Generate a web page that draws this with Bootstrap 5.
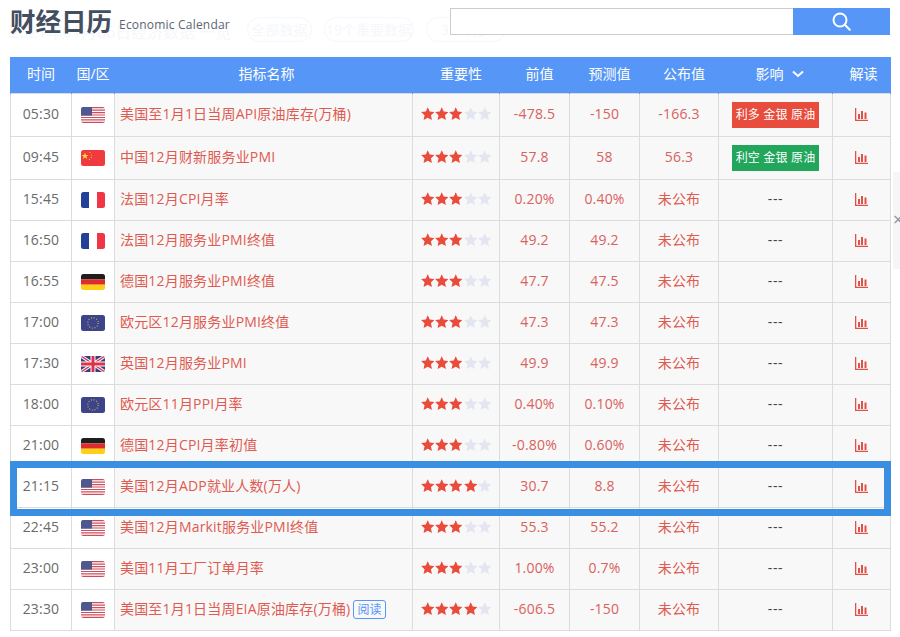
<!DOCTYPE html>
<html lang="zh-CN">
<head>
  <meta charset="UTF-8" />
  <meta name="viewport" content="width=device-width, initial-scale=1" />
  <title>财经日历</title>
  <link href="https://cdn.jsdelivr.net/npm/bootstrap@5.3.3/dist/css/bootstrap.min.css" rel="stylesheet" />
  <style>
    body {
      background: #fff;
      font-family: "Open Sans", "Noto Sans CJK SC", sans-serif;
      font-size: 14px;
      overflow: hidden;
    }

    .page-wrap { height: 637px; padding: 0 10px; overflow: hidden; }

    /* top bar */
    .top-bar { height: 57px; padding-top: 8px; }
    .page-title { font-size: 25.5px; font-weight: 700; color: #434e5e; line-height: 28px; margin: 0; position: relative; top: -1px; }
    .page-sub { font-size: 12px; letter-spacing: .2px; color: #5c6672; margin-left: 7px; position: relative; top: 3px; }
    .search-box { width: 440px; height: 27px; }
    .search-input { width: 343px; height: 27px; border: 1px solid #ccc; border-right: 0; border-radius: 0; padding: 0 8px; outline: none; }
    .search-btn { width: 97px; height: 27px; background: #5596f6; border: 0; border-radius: 0; padding: 0; }

    /* washed out text behind the title */
    .ghost-row { position: absolute; top: 17px; left: 10px; color: #f5f7fb; font-size: 14px; height: 25px; z-index: -1; }
    .ghost-title { width: 237px; font-size: 16px; padding-top: 3px; white-space: nowrap; }
    .ghost-pill { border: 1px solid #f6f7fa; border-radius: 13px; height: 25px; line-height: 23px; text-align: center; margin-right: 12px; }
    .ghost-all { width: 65px; }
    .ghost-key { width: 90px; }
    .ghost-more { width: 80px; }

    /* calendar table */
    .cal-table { table-layout: fixed; width: 880px; margin: 0; border-collapse: collapse; --bs-table-bg: transparent; }
    .cal-table col:nth-child(1) { width: 61px; }
    .cal-table col:nth-child(2) { width: 43px; }
    .cal-table col:nth-child(3) { width: 298px; }
    .cal-table col:nth-child(4) { width: 87px; }
    .cal-table col:nth-child(5) { width: 70px; }
    .cal-table col:nth-child(6) { width: 70px; }
    .cal-table col:nth-child(7) { width: 79px; }
    .cal-table col:nth-child(8) { width: 114px; }
    .cal-table col:nth-child(9) { width: 58px; }
    .cal-table th {
      background: #5596f6; color: #fff; font-weight: 400; height: 36px; padding: 0 0 2px;
      border: 1px solid #5596f6; border-top: 0; border-bottom: 0; text-align: center; vertical-align: middle;
    }
    .cal-table th:nth-child(3) { padding-left: 6px; }
    .cal-table th:nth-child(4),
    .cal-table th:nth-child(5),
    .cal-table th:nth-child(6),
    .cal-table th:nth-child(7) { padding-left: 10px; }
    .cal-table th:nth-child(8) { padding-left: 8px; }
    .cal-table th:nth-child(9) { padding-left: 4px; }
    .cal-table td {
      background: #f8f8f8; border: 1px solid #dcdcdc; padding: 0 0 2px; height: 41px;
      text-align: center; vertical-align: middle; color: #d8625c; letter-spacing: .18px;
    }
    .cal-table tr.tall td { height: 43px; }
    .cal-table td.time-cell { background: #fff; color: #6b6b6b; }
    .cal-table td.flag-cell { background: #fff; padding: 0; }
    .cal-table td.name-cell { text-align: left; padding-left: 5px; color: #df5a50; }
    .cal-table td.unset-cell { color: #df5a50; }
    .cal-table td.none-cell { color: #444; letter-spacing: .6px; }
    .cal-table td.tag-cell, .cal-table td.bars-cell { padding: 0; }
    .flag-svg { display: block; margin: 0 auto; width: 24px; height: 16px; border-radius: 2.5px; opacity: .92; }
    .star-row { display: flex; justify-content: center; gap: .8px; }
    .star-svg { width: 13.5px; height: 13.5px; display: block; }
    .star-on { fill: #ea4c3c; }
    .star-off { fill: #e3e6f0; }
    .tag-box { display: block; width: 87px; height: 26px; margin: 0 auto; line-height: 26px; font-size: 12px; color: #fff; }
    .tag-up { background: #e74c3c; }
    .tag-down { background: #21a65b; }
    .read-tag { display: inline-block; border: 1px solid #5596f6; border-radius: 3px; color: #5596f6; font-size: 12px; line-height: 17px; padding: 0 3px; margin-left: 3px; }
    .bars-svg { width: 13px; height: 13px; display: block; margin: 0 auto; }

    /* current event frame and side tab */
    .now-frame { position: absolute; left: 10px; top: 461px; width: 881px; height: 55px; border: 7px solid #3a8fe0; pointer-events: none; }
    .side-tab { position: absolute; left: 893px; top: 172px; width: 7px; height: 97px; background: #f6f6f6; color: #8a93a5; font-size: 18px; line-height: 94px; overflow: hidden; white-space: nowrap; }
  </style>
</head>
<body>

  <svg width="0" height="0" class="position-absolute">
    <defs>
      <symbol id="fl-us" viewBox="0 0 24 16">
        <rect width="24" height="16" fill="#fff"/>
        <path d="M0 0h24v1.2H0zM0 2.5h24v1.2H0zM0 5h24v1.2H0zM0 7.400h24v1.2H0zM0 9.900h24v1.2H0zM0 12.300h24v1.200H0zM0 14.800h24V16H0z" fill="#c8404f"/>
        <rect width="11" height="8.600" fill="#3f4a85"/>
      </symbol>
      <symbol id="fl-cn" viewBox="0 0 24 16">
        <rect width="24" height="16" fill="#ee2a30"/>
        <path d="M4 2.500l.9 2.500h2.600l-2.100 1.600.8 2.500L4 7.600 1.800 9.100l.8-2.500L.5 5h2.600z" fill="#fbd520"/>
        <circle cx="9" cy="2.500" r=".6" fill="#fbd520"/><circle cx="10.500" cy="5" r=".6" fill="#fbd520"/>
        <circle cx="10.300" cy="7.500" r=".6" fill="#fbd520"/><circle cx="8.500" cy="9.500" r=".6" fill="#fbd520"/>
      </symbol>
      <symbol id="fl-fr" viewBox="0 0 24 16">
        <rect width="24" height="16" fill="#fff"/>
        <rect width="8" height="16" fill="#12318f"/>
        <rect x="16" width="8" height="16" fill="#ef2637"/>
      </symbol>
      <symbol id="fl-de" viewBox="0 0 24 16">
        <rect width="24" height="5.400" fill="#0c0c0c"/>
        <rect y="5.400" width="24" height="5.300" fill="#dd1c1c"/>
        <rect y="10.700" width="24" height="5.300" fill="#fdcd00"/>
      </symbol>
      <symbol id="fl-eu" viewBox="0 0 24 16">
        <rect width="24" height="16" fill="#2e3580"/>
        <circle cx="12" cy="8" r="5.200" fill="none" stroke="#c9b64a" stroke-width="1.100" stroke-dasharray="1 1.720"/>
      </symbol>
      <symbol id="fl-uk" viewBox="0 0 24 16">
        <rect width="24" height="16" fill="#252f78"/>
        <path d="M0 0l24 16M24 0L0 16" stroke="#fff" stroke-width="3.200"/>
        <path d="M0 0l24 16M24 0L0 16" stroke="#d8203a" stroke-width="1.400"/>
        <path d="M12 0v16M0 8h24" stroke="#fff" stroke-width="5"/>
        <path d="M12 0v16M0 8h24" stroke="#d8203a" stroke-width="3"/>
      </symbol>
      <symbol id="st" viewBox="0 0 24 24">
        <path d="M12 .5l3.500 7.600 8.300 1-6.100 5.700 1.700 8.200L12 18.900 4.600 23l1.700-8.200L.2 9.100l8.300-1z"/>
      </symbol>
      <symbol id="bars" viewBox="0 0 13 13">
        <path d="M0 0h1.300v11.700H13V13H0z" fill="#e2504a"/>
        <path d="M3 6h2v5H3zM6 3h2v8H6zM9.500 4.500h2V11h-2z" fill="#e2504a"/>
      </symbol>
    </defs>
  </svg>

  <div class="page-wrap">
    <div class="ghost-row d-flex">
      <div class="ghost-title">2021年01月06日经济数据 一览</div>
      <div class="ghost-pill ghost-all">全部数据</div>
      <div class="ghost-pill ghost-key">19个重要数据</div>
      <div class="ghost-pill ghost-more">3个利多</div>
    </div>

    <div class="top-bar d-flex justify-content-between align-items-start">
      <div class="d-flex align-items-center">
        <h1 class="page-title">财经日历</h1>
        <span class="page-sub">Economic Calendar</span>
      </div>
      <div class="search-box d-flex">
        <input type="text" class="search-input" />
        <button class="search-btn d-flex align-items-center justify-content-center" type="button" aria-label="搜索">
          <svg width="19" height="19" viewBox="0 0 19 19" fill="none" stroke="#fff" stroke-width="2">
            <circle cx="8" cy="8" r="6.500"/>
            <path d="M12.800 12.800l5 5" stroke-linecap="round"/>
          </svg>
        </button>
      </div>
    </div>

    <table class="table cal-table">
      <colgroup>
        <col /><col /><col /><col /><col /><col /><col /><col /><col />
      </colgroup>
      <thead>
        <tr>
          <th>时间</th><th>国/区</th><th>指标名称</th><th>重要性</th><th>前值</th><th>预测值</th><th>公布值</th>
          <th>
            <span class="d-inline-flex align-items-center gap-2">影响
              <svg width="12" height="8" viewBox="0 0 12 8" fill="none" stroke="#fff" stroke-width="2"><path d="M1 1.500l5 4.500 5-4.500"/></svg>
            </span>
          </th>
          <th>解读</th>
        </tr>
      </thead>
      <tbody id="calRows"></tbody>
    </table>
  </div>

  <div class="now-frame"></div>
  <div class="side-tab">×</div>

  <script>
    const rows = [
      ["05:30", "us", "美国至1月1日当周API原油库存(万桶)", 3, "-478.5", "-150", "-166.3", ["up", "利多 金银 原油"]],
      ["09:45", "cn", "中国12月财新服务业PMI", 3, "57.8", "58", "56.3", ["down", "利空 金银 原油"]],
      ["15:45", "fr", "法国12月CPI月率", 3, "0.20%", "0.40%", "未公布"],
      ["16:50", "fr", "法国12月服务业PMI终值", 3, "49.2", "49.2", "未公布"],
      ["16:55", "de", "德国12月服务业PMI终值", 3, "47.7", "47.5", "未公布"],
      ["17:00", "eu", "欧元区12月服务业PMI终值", 3, "47.3", "47.3", "未公布"],
      ["17:30", "uk", "英国12月服务业PMI", 3, "49.9", "49.9", "未公布"],
      ["18:00", "eu", "欧元区11月PPI月率", 3, "0.40%", "0.10%", "未公布"],
      ["21:00", "de", "德国12月CPI月率初值", 3, "-0.80%", "0.60%", "未公布"],
      ["21:15", "us", "美国12月ADP就业人数(万人)", 4, "30.7", "8.8", "未公布"],
      ["22:45", "us", "美国12月Markit服务业PMI终值", 3, "55.3", "55.2", "未公布"],
      ["23:00", "us", "美国11月工厂订单月率", 3, "1.00%", "0.7%", "未公布"],
      ["23:30", "us", "美国至1月1日当周EIA原油库存(万桶)", 4, "-606.5", "-150", "未公布", null, true]
    ];

    function stars(n) {
      let out = "";
      for (let i = 0; i < 5; i++) {
        out += `<svg class="star-svg ${i < n ? "star-on" : "star-off"}"><use href="#st"/></svg>`;
      }
      return `<div class="star-row">${out}</div>`;
    }

    document.getElementById("calRows").innerHTML = rows.map(r => {
      const tag = r[7]
        ? `<span class="tag-box tag-${r[7][0]}">${r[7][1]}</span>`
        : "---";
      const read = r[8] ? `<span class="read-tag">阅读</span>` : "";
      return `<tr class="${r[7] ? "tall" : ""}">
        <td class="time-cell">${r[0]}</td>
        <td class="flag-cell"><svg class="flag-svg"><use href="#fl-${r[1]}"/></svg></td>
        <td class="name-cell">${r[2]}${read}</td>
        <td>${stars(r[3])}</td>
        <td>${r[4]}</td>
        <td>${r[5]}</td>
        <td class="${r[6] === "未公布" ? "unset-cell" : ""}">${r[6]}</td>
        <td class="${r[7] ? "tag-cell" : "none-cell"}">${tag}</td>
        <td class="bars-cell"><svg class="bars-svg"><use href="#bars"/></svg></td>
      </tr>`;
    }).join("");
  </script>
  <script src="https://cdn.jsdelivr.net/npm/bootstrap@5.3.3/dist/js/bootstrap.bundle.min.js"></script>
</body>
</html>
